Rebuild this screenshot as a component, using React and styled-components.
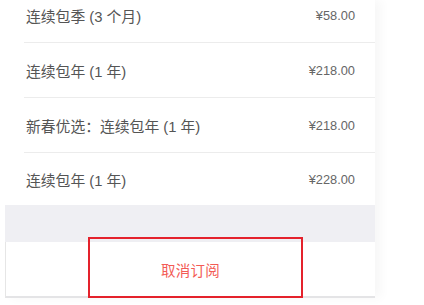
import React from "react";
import styled, { createGlobalStyle } from "styled-components";

const Global = createGlobalStyle`
  html, body { margin: 0; padding: 0; background: #ffffff; }
  body { font-family: "Liberation Sans", "Noto Sans CJK SC", sans-serif; overflow: hidden; }
`;

const Page = styled.div`
  width: 424px;
  height: 305px;
  overflow: hidden;
  background: #ffffff;
`;

const Screen = styled.div`
  margin-left: 5px;
  width: 370px;
  background: #ffffff;
  box-shadow: 6px 0 10px rgba(0, 0, 0, 0.035);
  display: flex;
  flex-direction: column;
`;

const List = styled.div`
  margin-top: -12px;
  display: flex;
  flex-direction: column;
`;

const Row = styled.div`
  margin-left: 19px;
  height: ${(p) => (p.$last ? "52px" : "55px")};
  box-sizing: border-box;
  padding: 0 20px 0 2px;
  display: flex;
  align-items: center;
  justify-content: space-between;
  border-bottom: ${(p) => (p.$last ? "none" : "1px solid #ececec")};
`;

const Name = styled.span`
  font-family: "Liberation Sans", "Noto Sans CJK SC", sans-serif;
  font-size: 14.8px;
  color: #555555;
`;

const Price = styled.span`
  font-family: "Liberation Sans", sans-serif;
  font-size: 12.8px;
  color: #666666;
`;

const Gap = styled.div`
  height: 37px;
  background: #efeff3;
`;

const ButtonBar = styled.div`
  position: relative;
  height: 54px;
  border-left: 1px solid #e6e6e6;
  border-bottom: 2px solid #e4e4e6;
  display: flex;
  align-items: center;
  justify-content: center;
  background: #ffffff;
`;

const CancelText = styled.span`
  font-family: "Noto Sans CJK SC", sans-serif;
  font-size: 14.5px;
  color: #f35b55;
  letter-spacing: 0.3px;
`;

const Highlight = styled.div`
  position: absolute;
  left: 82px;
  top: -5px;
  width: 215px;
  height: 61px;
  box-sizing: border-box;
  border: 2px solid #e4222c;
  pointer-events: none;
`;

const plans = [
  { name: "连续包季 (3 个月)", price: "¥58.00" },
  { name: "连续包年 (1 年)", price: "¥218.00" },
  { name: "新春优选：连续包年 (1 年)", price: "¥218.00" },
  { name: "连续包年 (1 年)", price: "¥228.00" },
];

export default function App() {
  return (
    <Page>
      <Global />
      <Screen>
        <List>
          {plans.map((p, i) => (
            <Row key={i} $last={i === plans.length - 1}>
              <Name>{p.name}</Name>
              <Price>{p.price}</Price>
            </Row>
          ))}
        </List>
        <Gap />
        <ButtonBar>
          <CancelText>取消订阅</CancelText>
          <Highlight />
        </ButtonBar>
      </Screen>
    </Page>
  );
}
